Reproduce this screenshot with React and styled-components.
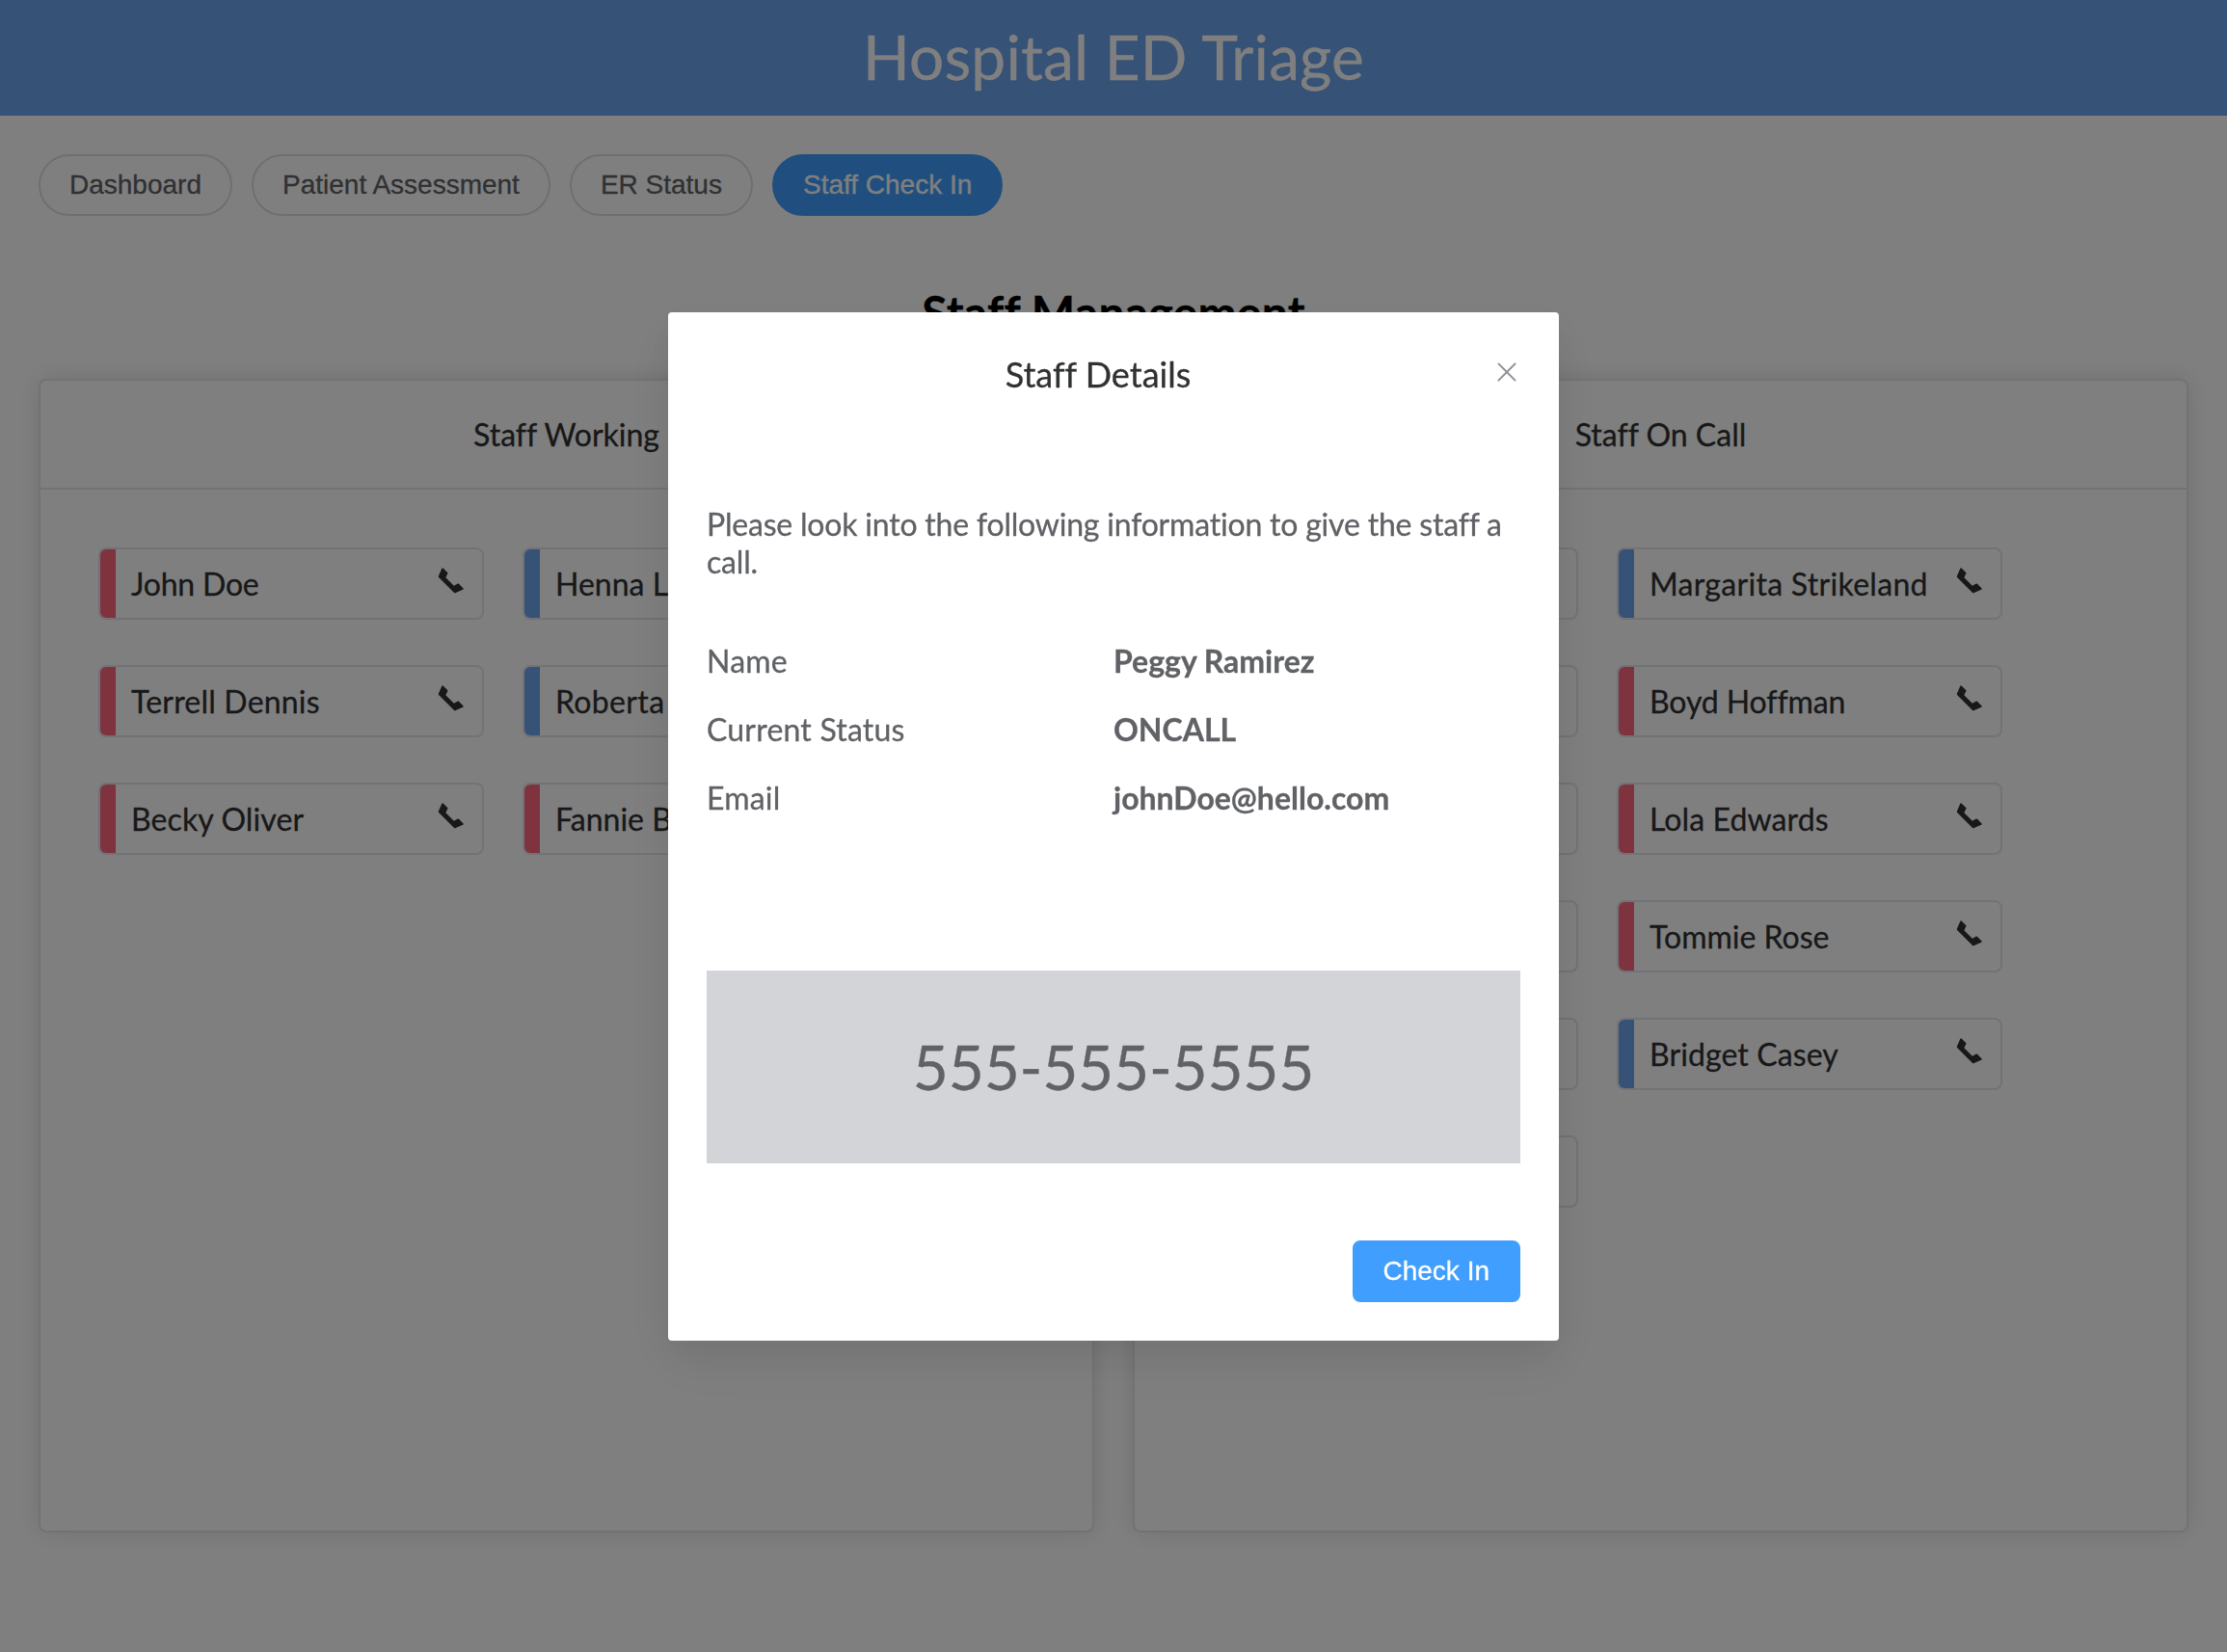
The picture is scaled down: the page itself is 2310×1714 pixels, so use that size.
import React from "react";
import styled, { createGlobalStyle } from "styled-components";

const GlobalStyle = createGlobalStyle`
  * { box-sizing: border-box; }
  html, body { margin: 0; height: 1714px; overflow: hidden; background: #fff; }
  body {
    font-family: Lato, sans-serif;
    font-size: 32px;
    line-height: 39px;
    color: #303133;
    font-variant-ligatures: none;
    -webkit-text-stroke: 0.3px currentColor;
  }
`;

const Page = styled.div`
  height: 1714px;
`;

const Header = styled.header`
  height: 120px;
  display: flex;
  align-items: center;
  justify-content: center;
  background: #6ca4ee;
  color: #fff;
  font-size: 64px;
  line-height: 76px;
  letter-spacing: 0.15px;
  padding-bottom: 2px;
`;

const Nav = styled.nav`
  display: flex;
  gap: 20px;
  padding: 40px 40px 0;
`;

const Button = styled.button`
  height: 64px;
  margin: 0;
  padding: 0 30px;
  border: 2px solid ${(p) => (p.$primary ? "#409eff" : "#dcdfe6")};
  border-radius: ${(p) => (p.$round ? "40px" : "8px")};
  background: ${(p) => (p.$primary ? "#409eff" : "#fff")};
  color: ${(p) => (p.$primary ? "#fff" : "#606266")};
  font-family: "Liberation Sans", Arial, sans-serif;
  font-size: 28px;
  line-height: 28px;
  white-space: nowrap;
`;

const Heading = styled.h2`
  margin: 71px 0 0;
  height: 98px;
  font-size: 48px;
  line-height: 58px;
  letter-spacing: 0.25px;
  font-weight: 700;
  text-align: center;
  color: #000;
`;

const Panels = styled.main`
  display: grid;
  grid-template-columns: 1fr 1fr;
  gap: 40px;
  padding: 0 40px;
`;

const Panel = styled.section`
  height: 1197px;
  border: 2px solid #e5e5ee;
  border-radius: 8px;
  background: #fff;
  box-shadow: 0 0 24px rgba(0, 0, 0, 0.12);
`;

const PanelTitle = styled.div`
  height: 113px;
  padding: 36px 40px;
  border-bottom: 2px solid #e5e5ee;
  text-align: center;
`;

const StaffColumns = styled.div`
  display: flex;
  gap: 40px;
  padding: 60px;
`;

const StaffColumn = styled.div`
  display: flex;
  flex-direction: column;
  gap: 47px;
  width: 400px;
`;

const StaffItem = styled.div`
  display: flex;
  height: 75px;
  border: 2px solid #e5e5ee;
  border-radius: 8px;
  overflow: hidden;
`;

const Stripe = styled.div`
  width: 16px;
  background: ${(p) => (p.$tone === "blue" ? "#6ca4ee" : "#ff667f")};
`;

const StaffBody = styled.div`
  flex: 1;
  display: flex;
  justify-content: space-between;
  padding: 16px;
  white-space: nowrap;
`;

const StaffName = styled.span`
  letter-spacing: ${(p) => p.$tracking || 0}px;
`;

const Icon = styled.svg`
  display: block;
  flex: none;
  width: 32px;
  height: 32px;
  fill: currentColor;
  -webkit-text-stroke: 0;
`;

const Overlay = styled.div`
  position: fixed;
  inset: 0;
  padding-top: 324px;
  background: rgba(0, 0, 0, 0.5);
`;

const Dialog = styled.div`
  width: 924px;
  height: 1067px;
  margin: 0 auto;
  padding: 40px;
  border-radius: 4px;
  background: #fff;
  color: #606266;
  box-shadow: 0 24px 64px 8px rgba(0, 0, 0, 0.04), 0 16px 40px rgba(0, 0, 0, 0.08);
`;

const DialogHeader = styled.div`
  position: relative;
  padding-right: 32px;
  text-align: center;
  font-size: 36px;
  line-height: 48px;
  color: #303133;
`;

const CloseButton = styled.button`
  position: absolute;
  top: 6px;
  right: -2px;
  padding: 0;
  border: 0;
  background: none;
  color: #909399;
`;

const Message = styled.p`
  margin: 112px 0 0;
  letter-spacing: -0.2px;
`;

const Details = styled.dl`
  display: grid;
  grid-template-columns: 1fr 1fr;
  row-gap: 32px;
  margin: 64px 0 0;
`;

const Term = styled.dt`
  letter-spacing: 0.2px;
`;

const Value = styled.dd`
  margin: 0;
  font-weight: 700;
`;

const Phone = styled.div`
  display: flex;
  align-items: center;
  justify-content: center;
  height: 200px;
  margin-top: 160px;
  background: #d3d4d8;
  font-size: 64px;
  line-height: 76px;
  letter-spacing: -0.2px;
`;

const DialogFooter = styled.div`
  display: flex;
  justify-content: flex-end;
  margin-top: 80px;
`;

const PhoneIcon = () => (
  <Icon viewBox="0 0 1024 1024">
    <path d="M199.232 125.568 90.624 379.008a32 32 0 0 0 6.784 35.2l512.384 512.384a32 32 0 0 0 35.2 6.784l253.44-108.608a32 32 0 0 0 10.048-52.032L769.6 633.92a32 32 0 0 0-36.928-5.952l-130.176 65.088-271.488-271.552 65.024-130.176a32 32 0 0 0-5.952-36.928L251.2 116.416a32 32 0 0 0-51.968 9.152z" />
  </Icon>
);

const CloseIcon = () => (
  <Icon viewBox="0 0 1024 1024">
    <path d="M764.288 214.592 512 466.88 259.712 214.592a31.936 31.936 0 0 0-45.12 45.12L466.752 512 214.528 764.224a31.936 31.936 0 1 0 45.12 45.184L512 557.184l252.288 252.288a31.936 31.936 0 0 0 45.12-45.12L557.12 512.064l252.288-252.352a31.936 31.936 0 1 0-45.12-45.184z" />
  </Icon>
);

const tabs = ["Dashboard", "Patient Assessment", "ER Status", "Staff Check In"];

const panels = [
  {
    title: "Staff Working",
    columns: [
      [["John Doe", "red", -0.2], ["Terrell Dennis", "red", 0.2], ["Becky Oliver", "red", 0.1]],
      [["Henna Lopez", "blue"], ["Roberta", "blue", 0.35], ["Fannie B", "red"]],
    ],
  },
  {
    title: "Staff On Call",
    columns: [
      [["", "red"], ["", "red"], ["", "blue"], ["", "red"], ["", "blue"], ["", "red"]],
      [
        ["Margarita Strikeland", "blue", 0.3],
        ["Boyd Hoffman", "red", -0.1],
        ["Lola Edwards", "red", 0.1],
        ["Tommie Rose", "red"],
        ["Bridget Casey", "blue", 0.1],
      ],
    ],
  },
];

const details = [
  ["Name", "Peggy Ramirez"],
  ["Current Status", "ONCALL"],
  ["Email", "johnDoe@hello.com"],
];

export default function App() {
  return (
    <>
      <GlobalStyle />
      <Page>
        <Header>Hospital ED Triage</Header>
        <Nav>
          {tabs.map((tab) => (
            <Button key={tab} $round $primary={tab === "Staff Check In"}>
              {tab}
            </Button>
          ))}
        </Nav>
        <Heading>Staff Management</Heading>
        <Panels>
          {panels.map((panel) => (
            <Panel key={panel.title}>
              <PanelTitle>{panel.title}</PanelTitle>
              <StaffColumns>
                {panel.columns.map((column, c) => (
                  <StaffColumn key={c}>
                    {column.map(([name, tone, tracking], i) => (
                      <StaffItem key={i}>
                        <Stripe $tone={tone} />
                        <StaffBody>
                          <StaffName $tracking={tracking}>{name}</StaffName>
                          <PhoneIcon />
                        </StaffBody>
                      </StaffItem>
                    ))}
                  </StaffColumn>
                ))}
              </StaffColumns>
            </Panel>
          ))}
        </Panels>
      </Page>
      <Overlay>
        <Dialog role="dialog">
          <DialogHeader>
            Staff Details
            <CloseButton aria-label="Close">
              <CloseIcon />
            </CloseButton>
          </DialogHeader>
          <Message>
            Please look into the following information to give the staff a call.
          </Message>
          <Details>
            {details.map(([term, value]) => (
              <React.Fragment key={term}>
                <Term>{term}</Term>
                <Value>{value}</Value>
              </React.Fragment>
            ))}
          </Details>
          <Phone>555-555-5555</Phone>
          <DialogFooter>
            <Button $primary>Check In</Button>
          </DialogFooter>
        </Dialog>
      </Overlay>
    </>
  );
}
